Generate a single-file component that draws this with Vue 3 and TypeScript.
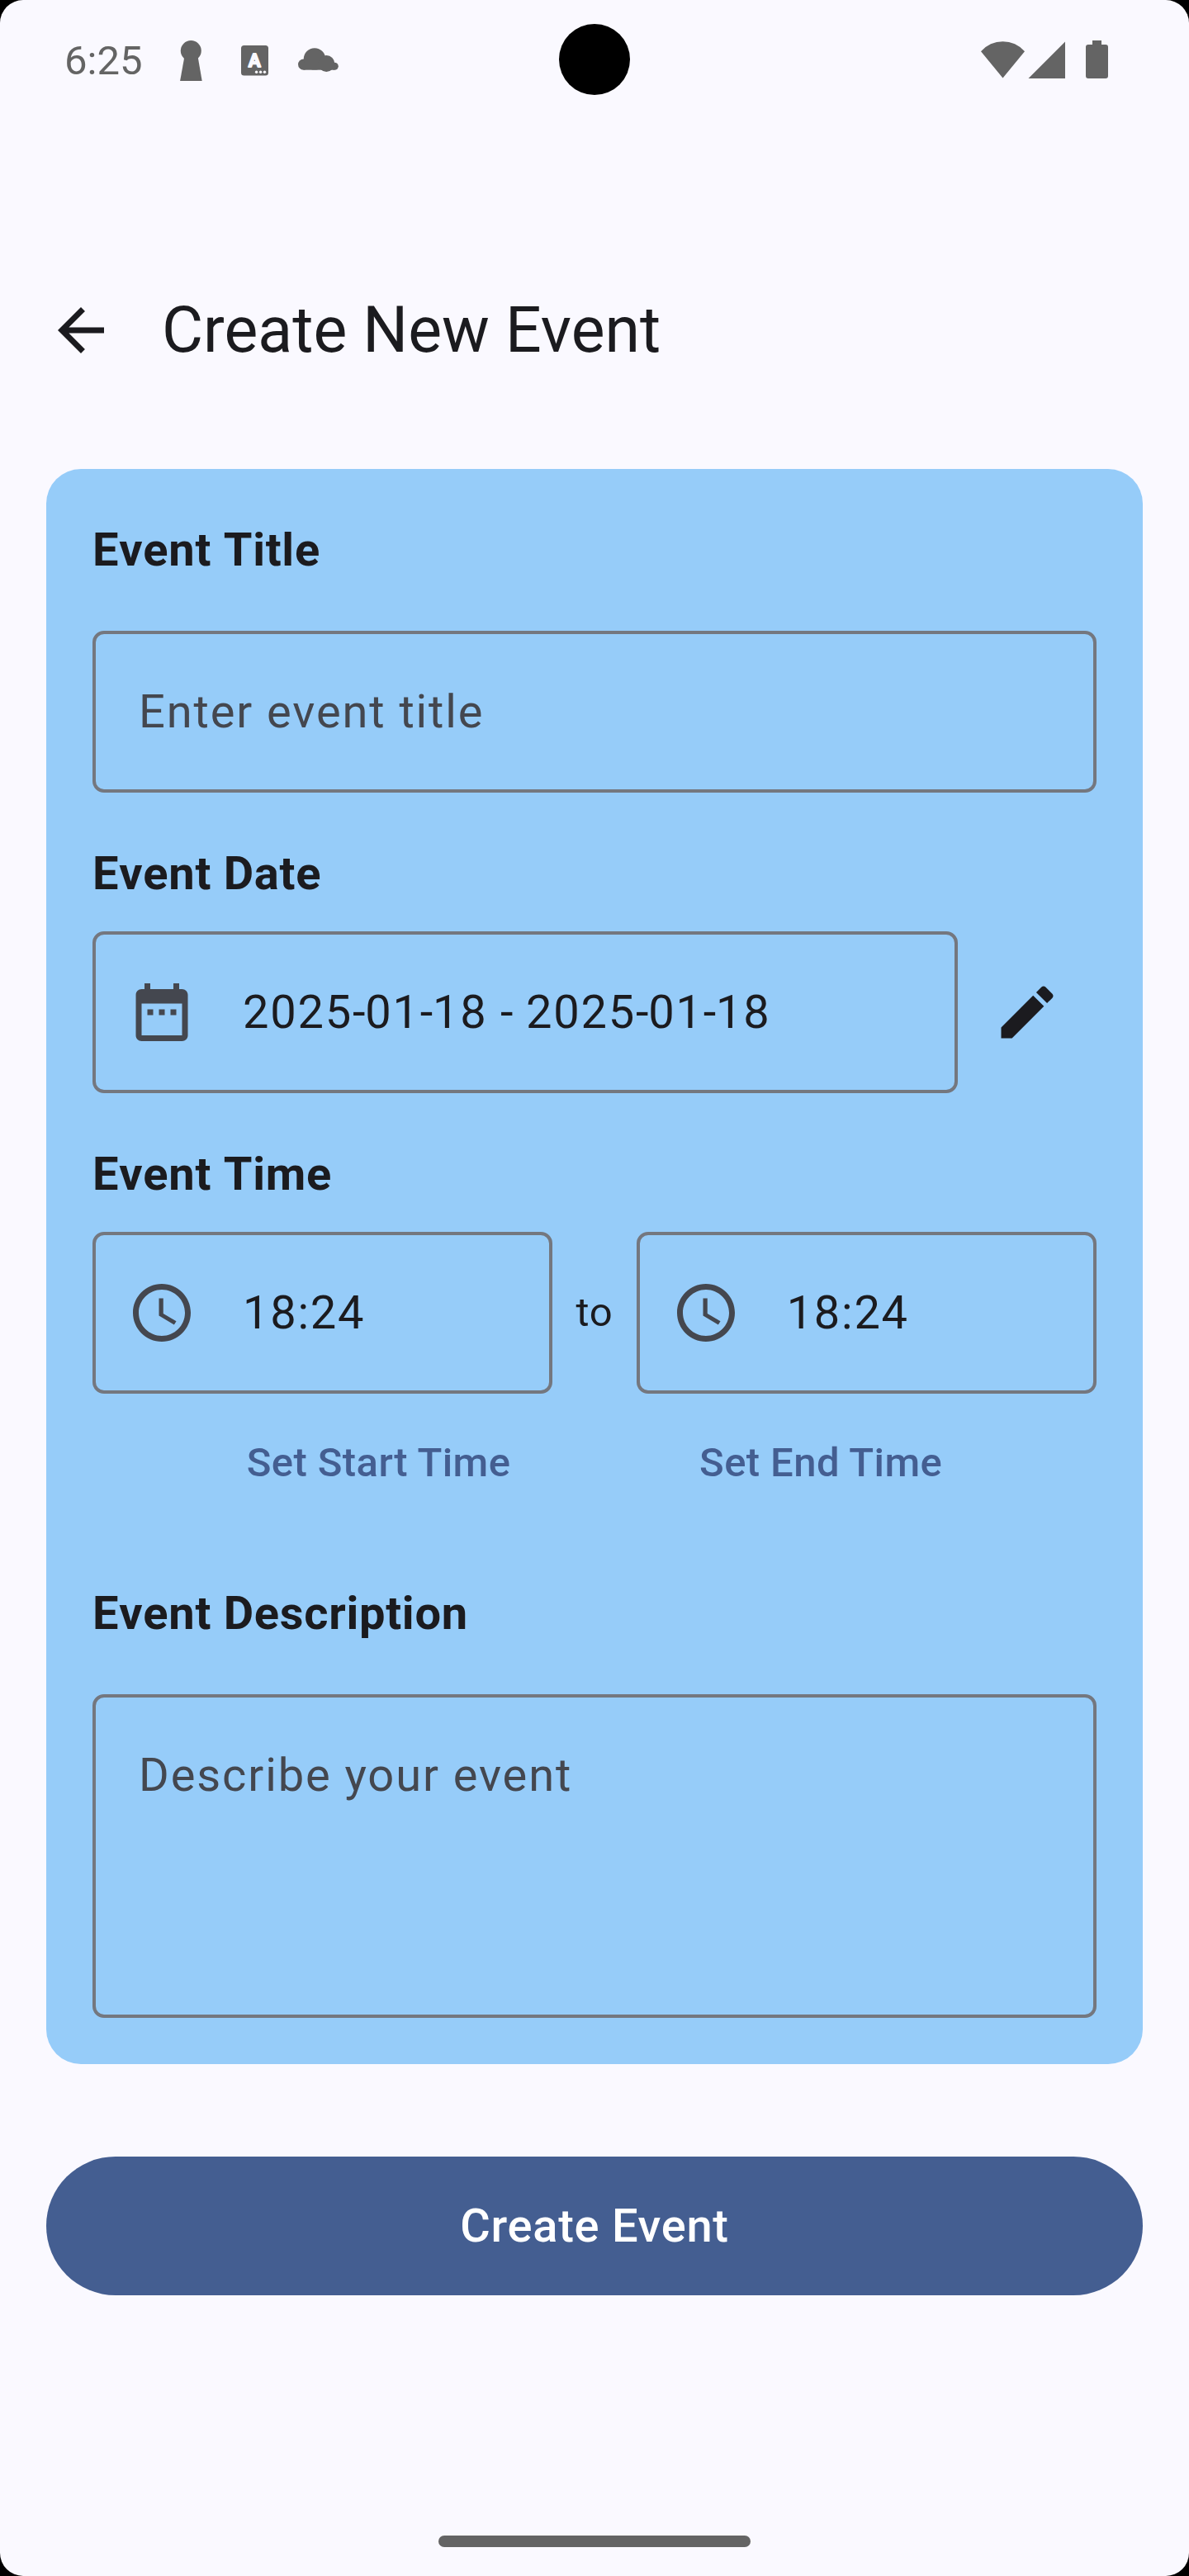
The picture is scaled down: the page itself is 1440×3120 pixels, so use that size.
<script setup lang="ts">
import { computed, ref } from 'vue'

const title = ref('')
const dateRange = ref('2025-01-18 - 2025-01-18')
const startTime = ref('18:24')
const endTime = ref('18:24')
const description = ref('')

// Hyphens are set slightly tighter than the digits around them.
const dateParts = computed(() => dateRange.value.split(/(-)/))
</script>

<template>
  <div class="device">
    <main class="screen">
      <div class="status">
        <span class="clock">6:25</span>
        <svg class="notif" width="210" height="65" viewBox="210 40 210 65">
          <circle cx="231.3" cy="61.5" r="12.5" />
          <path d="M223.5 68h16l5.2 30h-26.6z" />
          <rect x="292" y="55" width="33" height="36.5" rx="3.5" />
          <text class="badge-letter" x="308.4" y="80.6" text-anchor="middle">A</text>
          <g class="dots">
            <circle cx="310.6" cy="87.3" r="1.7" />
            <circle cx="315.6" cy="87.3" r="1.7" />
            <circle cx="320.5" cy="87.3" r="1.7" />
          </g>
          <circle cx="367.6" cy="78.100" r="6.600" />
          <circle cx="381" cy="71.400" r="13.200" />
          <circle cx="395.300" cy="77" r="10" />
          <circle cx="405.300" cy="80.200" r="4.500" />
          <rect x="367.600" y="76" width="37.700" height="8.700" />
        </svg>
        <svg class="system" width="170" height="65" viewBox="1180 40 170 65">
          <path d="M1214.500 94.500L1188 62.300a35 35 0 0 1 53 0z" />
          <path d="M1290 50.500V95h-44.500z" />
          <path d="M1323 49h11v5h5a3 3 0 0 1 3 3v35a3 3 0 0 1-3 3h-21a3 3 0 0 1-3-3V57a3 3 0 0 1 3-3h5z" />
        </svg>
        <i class="camera"></i>
      </div>

      <header class="appbar">
        <svg class="icon" viewBox="0 0 24 24"><path d="M20 11H7.830l5.590-5.590L12 4l-8 8 8 8 1.410-1.410L7.830 13H20v-2z" /></svg>
        <h1>Create New Event</h1>
      </header>

      <section class="card">
        <h2>Event Title</h2>
        <div class="field wide-gap"><span class="placeholder">{{ title || 'Enter event title' }}</span></div>

        <h2 class="next">Event Date</h2>
        <div class="row">
          <div class="field with-icon grow">
            <svg class="icon muted" viewBox="0 0 24 24"><path d="M9 11H7v2h2v-2zm4 0h-2v2h2v-2zm4 0h-2v2h2v-2zm2-7h-1V2h-2v2H8V2H6v2H5c-1.110 0-1.990.9-1.990 2L3 20c0 1.100.89 2 2 2h14c1.100 0 2-.9 2-2V6c0-1.100-.9-2-2-2zm0 16H5V9h14v11z" /></svg>
            <span class="date"><span v-for="(part, i) in dateParts" :key="i" :class="{ hyphen: part === '-' }">{{ part }}</span></span>
          </div>
          <div class="icon-button">
            <svg class="icon" viewBox="0 0 24 24"><path d="M3 17.250V21h3.750L17.810 9.940l-3.750-3.750L3 17.250zM20.710 7.040c.39-.39.39-1.020 0-1.410l-2.340-2.340c-.39-.39-1.020-.39-1.410 0l-1.830 1.830 3.750 3.750 1.830-1.830z" /></svg>
          </div>
        </div>

        <h2 class="next">Event Time</h2>
        <div class="row">
          <div class="field with-icon grow">
            <svg class="icon muted" viewBox="0 0 24 24"><path d="M11.990 2C6.470 2 2 6.480 2 12s4.470 10 9.990 10C17.520 22 22 17.520 22 12S17.520 2 11.990 2zM12 20c-4.420 0-8-3.580-8-8s3.580-8 8-8 8 3.580 8 8-3.580 8-8 8zm.5-13H11v6l5.250 3.150.75-1.230-4.500-2.670z" /></svg>
            <span>{{ startTime }}</span>
          </div>
          <span class="to">to</span>
          <div class="field with-icon grow">
            <svg class="icon muted" viewBox="0 0 24 24"><path d="M11.990 2C6.470 2 2 6.480 2 12s4.470 10 9.990 10C17.520 22 22 17.520 22 12S17.520 2 11.990 2zM12 20c-4.420 0-8-3.580-8-8s3.580-8 8-8 8 3.580 8 8-3.580 8-8 8zm.5-13H11v6l5.250 3.150.75-1.230-4.500-2.670z" /></svg>
            <span>{{ endTime }}</span>
          </div>
        </div>
        <div class="time-actions">
          <span class="text-button">Set Start Time</span>
          <span class="text-button">Set End Time</span>
        </div>

        <h2 class="next">Event Description</h2>
        <div class="field area wide-gap"><span class="placeholder">{{ description || 'Describe your event' }}</span></div>
      </section>

      <div class="submit">Create Event</div>
      <div class="home-bar"></div>
    </main>
  </div>
</template>

<style>
body {
  margin: 0;
  background: #000;
}
</style>

<style scoped>
.device {
  width: 1440px;
  height: 3120px;
  background: #000;
  font-family: Roboto, sans-serif;
  color: #1b1b1f;
}
.screen {
  box-sizing: border-box;
  height: 3120px;
  display: flex;
  flex-direction: column;
  background: #faf9ff;
  border-radius: 28px;
  overflow: hidden;
}
.status {
  position: relative;
  box-sizing: border-box;
  height: 144px;
  padding: 40px 90px 0 78px;
  display: flex;
  align-items: flex-start;
  color: #646464;
  fill: #646464;
  flex: none;
}
.clock {
  width: 132px;
  font-size: 49px;
  line-height: 68px;
}
.system {
  margin-left: auto;
}
.status svg {
  display: block;
  flex: none;
}
.badge-letter {
  font: 500 22px Roboto, sans-serif;
  fill: #faf9ff;
  stroke: #faf9ff;
  stroke-width: 2.2px;
  stroke-linejoin: round;
}
.dots {
  fill: #faf9ff;
}
.camera {
  position: absolute;
  left: 677px;
  top: 29px;
  width: 86px;
  height: 86px;
  border-radius: 50%;
  background: #000;
}
.appbar {
  flex: none;
  height: 224px;
  margin-top: 144px;
  padding: 0 56px;
  display: flex;
  align-items: center;
  gap: 56px;
  margin-bottom: 56px;
}
h1 {
  margin: 0;
  font-size: 77px;
  line-height: 98px;
  font-weight: 400;
}
.icon {
  display: block;
  flex: none;
  width: 84px;
  height: 84px;
  fill: currentColor;
}
.muted {
  color: #44474f;
}
.card {
  box-sizing: border-box;
  flex: none;
  height: 1932px;
  margin: 0 56px;
  padding: 56px;
  border-radius: 42px;
  background: #96ccf9;
}
h2 {
  margin: 0 0 28px;
  font-size: 56px;
  line-height: 84px;
  font-weight: 700;
  letter-spacing: 0.725px;
  font-kerning: none;
}
.next {
  margin-top: 56px;
}
.field {
  box-sizing: border-box;
  height: 196px;
  padding: 0 52px;
  border: 4px solid #74777f;
  border-radius: 14px;
  display: flex;
  align-items: center;
  font-size: 56px;
  line-height: 84px;
  letter-spacing: 1.75px;
  white-space: nowrap;
}
.wide-gap {
  margin-top: 56px;
}
.with-icon {
  padding-left: 38px;
  gap: 56px;
}
.grow {
  flex: 1 1 0;
  min-width: 0;
}
.area {
  height: 392px;
  padding-top: 52px;
  align-items: flex-start;
}
.placeholder {
  color: #44474f;
  letter-spacing: 1.9px;
}
.date {
  white-space: pre;
}
.hyphen {
  letter-spacing: -0.15px;
}
.row {
  display: flex;
  align-items: center;
}
.icon-button {
  width: 168px;
  display: flex;
  padding-left: 42px;
  box-sizing: border-box;
}
.to {
  margin: 0 28px;
  font-size: 49px;
  line-height: 70px;
  letter-spacing: 0.875px;
}
.time-actions {
  height: 168px;
  display: flex;
  align-items: center;
  justify-content: space-evenly;
}
.text-button {
  padding: 0 42px;
  font-size: 49px;
  line-height: 70px;
  font-weight: 500;
  letter-spacing: 0.4px;
  color: #445e91;
}
.submit {
  flex: none;
  margin: 112px 56px 0;
  height: 168px;
  border-radius: 84px;
  background: #445e91;
  color: #fff;
  font-size: 56px;
  line-height: 168px;
  font-weight: 500;
  letter-spacing: 0.725px;
  text-align: center;
}
.home-bar {
  flex: none;
  width: 378px;
  height: 14px;
  margin: auto auto 35px;
  border-radius: 7px;
  background: #646464;
}
</style>
